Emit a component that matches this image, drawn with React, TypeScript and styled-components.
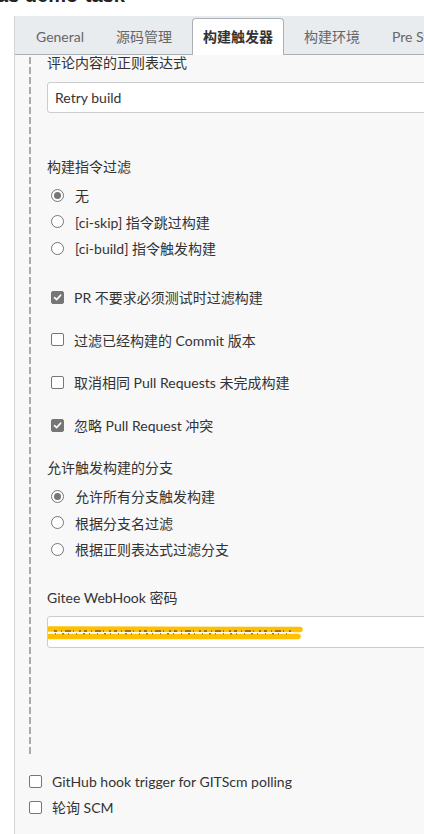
import React from "react";
import styled, { createGlobalStyle } from "styled-components";

const Global = createGlobalStyle`
  html, body { margin: 0; padding: 0; overflow: hidden; background: #fff; }
  body {
    font-family: Lato, "Noto Sans CJK SC", sans-serif;
    font-size: 14px;
    color: #333;
  }
`;

const Page = styled.div`
  width: 424px;
  height: 834px;
  overflow: hidden;
  display: flex;
  flex-direction: column;
  background: #fff;
`;

const Header = styled.div`
  height: 16px;
  overflow: hidden;
  flex: none;
`;

const Title = styled.div`
  margin-top: -17px;
  margin-left: -3px;
  font-family: "Liberation Sans", "Noto Sans CJK SC", sans-serif;
  font-weight: bold;
  font-size: 20px;
  line-height: 24px;
  color: #222;
  white-space: nowrap;
`;

const Main = styled.div`
  flex: 1;
  margin-left: 14px;
  border-left: 1px solid #d4d4d4;
  background: #f8f8f8;
  overflow: hidden;
  display: flex;
  flex-direction: column;
`;

const TabBar = styled.div`
  height: 39px;
  flex: none;
  box-sizing: border-box;
  background: #e9ecef;
  border-bottom: 1px solid #aab0b6;
  display: flex;
  align-items: flex-end;
  padding-left: 9px;
  gap: 8px;
  white-space: nowrap;
`;

const Tab = styled.div<{ $active?: boolean }>`
  flex: none;
  height: 37px;
  box-sizing: border-box;
  padding: 0 ${(p) => (p.$active ? 10 : 11)}px 2px;
  display: flex;
  align-items: center;
  font-size: 14px;
  margin-bottom: -1px;
  color: ${(p) => (p.$active ? "#333" : "#666")};
  font-weight: ${(p) => (p.$active ? 700 : 400)};
  background: ${(p) => (p.$active ? "#fff" : "transparent")};
  border: 1px solid ${(p) => (p.$active ? "#aab0b6" : "transparent")};
  border-bottom: none;
  border-radius: 4px 4px 0 0;
`;

const Section = styled.div`
  margin-left: 14px;
  padding-left: 18px;
  padding-bottom: 107px;
  background-image: linear-gradient(to bottom, #aaaaaa 70%, transparent 70%);
  background-size: 2px 10px;
  background-repeat: repeat-y;
  background-position: 0 2px;
  display: flex;
  flex-direction: column;
`;

const FieldLabel = styled.div<{ $mt?: number }>`
  line-height: 18px;
  height: 18px;
  margin-top: ${(p) => p.$mt ?? 0}px;
  white-space: nowrap;
`;

const TextBox = styled.div<{ $mt: number; $h: number }>`
  margin-top: ${(p) => p.$mt}px;
  height: ${(p) => p.$h}px;
  width: 420px;
  box-sizing: border-box;
  background: #fff;
  border: 1px solid #ccc;
  border-radius: 3px;
  display: flex;
  align-items: center;
  padding-left: 7px;
  white-space: nowrap;
  overflow: hidden;
`;

const RadioGroup = styled.div<{ $mt: number }>`
  margin-top: ${(p) => p.$mt}px;
  display: flex;
  flex-direction: column;
`;

const RadioRow = styled.div`
  height: 26.5px;
  display: flex;
  align-items: center;
  padding-left: 4px;
  gap: 11px;
  white-space: nowrap;
`;

const RadioDot = styled.span<{ $on?: boolean }>`
  width: 13px;
  height: 13px;
  box-sizing: border-box;
  border-radius: 50%;
  border: 1px solid #767676;
  background: #fff;
  display: flex;
  align-items: center;
  justify-content: center;
  flex: none;
  &::after {
    content: "";
    width: 7px;
    height: 7px;
    border-radius: 50%;
    background: ${(p) => (p.$on ? "#767676" : "transparent")};
  }
`;

const CheckList = styled.div<{ $mt: number; $gap: number }>`
  margin-top: ${(p) => p.$mt}px;
  display: flex;
  flex-direction: column;
  gap: ${(p) => p.$gap}px;
`;

const CheckRow = styled.div<{ $indent: number; $h: number }>`
  height: ${(p) => p.$h}px;
  display: flex;
  align-items: center;
  padding-left: ${(p) => p.$indent}px;
  gap: 10px;
  white-space: nowrap;
`;

const Box = styled.span<{ $on?: boolean }>`
  width: 13px;
  height: 13px;
  box-sizing: border-box;
  border-radius: 2px;
  border: 1px solid #767676;
  background: ${(p) => (p.$on ? "#767676" : "#fff")};
  display: flex;
  align-items: center;
  justify-content: center;
  flex: none;
`;

const Outer = styled.div`
  margin-left: 14px;
  margin-top: 13px;
  display: flex;
  flex-direction: column;
`;

const Check = ({ on }: { on?: boolean }) => (
  <Box $on={on}>
    {on && (
      <svg width="9" height="9" viewBox="0 0 9 9">
        <path d="M1.5 4.6 L3.6 6.6 L7.6 2.2" fill="none" stroke="#fff" strokeWidth="1.6" strokeLinecap="round" strokeLinejoin="round" />
      </svg>
    )}
  </Box>
);

const Scribble = () => (
  <svg width="262" height="22" viewBox="0 0 262 22" style={{ marginLeft: -8, flex: "none" }}>
    <path d="M2.5 8 L253 8.5" stroke="#ffc000" strokeWidth="5.5" strokeLinecap="round" fill="none" />
    <path d="M2.5 15.5 L251 15.5" stroke="#ffc000" strokeWidth="5.5" strokeLinecap="round" fill="none" />
    <path d="M6 11.5 L246 11.5" stroke="#fff" strokeWidth="1.2" fill="none" />
    <path d="M7 10 L247 10" stroke="#3a2a10" strokeWidth="1.2" strokeDasharray="3 4 1 3 6 2 1 5 2 3" fill="none" />
    <path d="M8 12.8 L246 12.8" stroke="#5a4a20" strokeWidth="1" strokeDasharray="1 6 2 4 1 7" fill="none" />
  </svg>
);

export default function App() {
  return (
    <Page>
      <Global />
      <Header>
        <Title>as demo-task</Title>
      </Header>
      <Main>
        <TabBar>
          <Tab>General</Tab>
          <Tab>源码管理</Tab>
          <Tab $active>构建触发器</Tab>
          <Tab>构建环境</Tab>
          <Tab>Pre Steps</Tab>
        </TabBar>
        <Section>
          <FieldLabel $mt={-1}>评论内容的正则表达式</FieldLabel>
          <TextBox $mt={10} $h={31}>Retry build</TextBox>

          <FieldLabel $mt={45}>构建指令过滤</FieldLabel>
          <RadioGroup $mt={6}>
            <RadioRow><RadioDot $on /><span>无</span></RadioRow>
            <RadioRow><RadioDot /><span>[ci-skip] 指令跳过构建</span></RadioRow>
            <RadioRow><RadioDot /><span>[ci-build] 指令触发构建</span></RadioRow>
          </RadioGroup>

          <CheckList $mt={24.5} $gap={20.7}>
            <CheckRow $indent={4} $h={22}><Check on /><span>PR 不要求必须测试时过滤构建</span></CheckRow>
            <CheckRow $indent={4} $h={22}><Check /><span>过滤已经构建的 Commit 版本</span></CheckRow>
            <CheckRow $indent={4} $h={22}><Check /><span>取消相同 Pull Requests 未完成构建</span></CheckRow>
            <CheckRow $indent={4} $h={22}><Check on /><span>忽略 Pull Request 冲突</span></CheckRow>
          </CheckList>

          <FieldLabel $mt={23}>允许触发构建的分支</FieldLabel>
          <RadioGroup $mt={5.75}>
            <RadioRow><RadioDot $on /><span>允许所有分支触发构建</span></RadioRow>
            <RadioRow><RadioDot /><span>根据分支名过滤</span></RadioRow>
            <RadioRow><RadioDot /><span>根据正则表达式过滤分支</span></RadioRow>
          </RadioGroup>

          <FieldLabel $mt={26.75}>Gitee WebHook 密码</FieldLabel>
          <TextBox $mt={9} $h={32}><Scribble /></TextBox>
        </Section>
        <Outer>
          <CheckList $mt={0} $gap={0}>
            <CheckRow $indent={0} $h={26}><Check /><span>GitHub hook trigger for GITScm polling</span></CheckRow>
            <CheckRow $indent={0} $h={26}><Check /><span>轮询 SCM</span></CheckRow>
          </CheckList>
        </Outer>
      </Main>
    </Page>
  );
}
